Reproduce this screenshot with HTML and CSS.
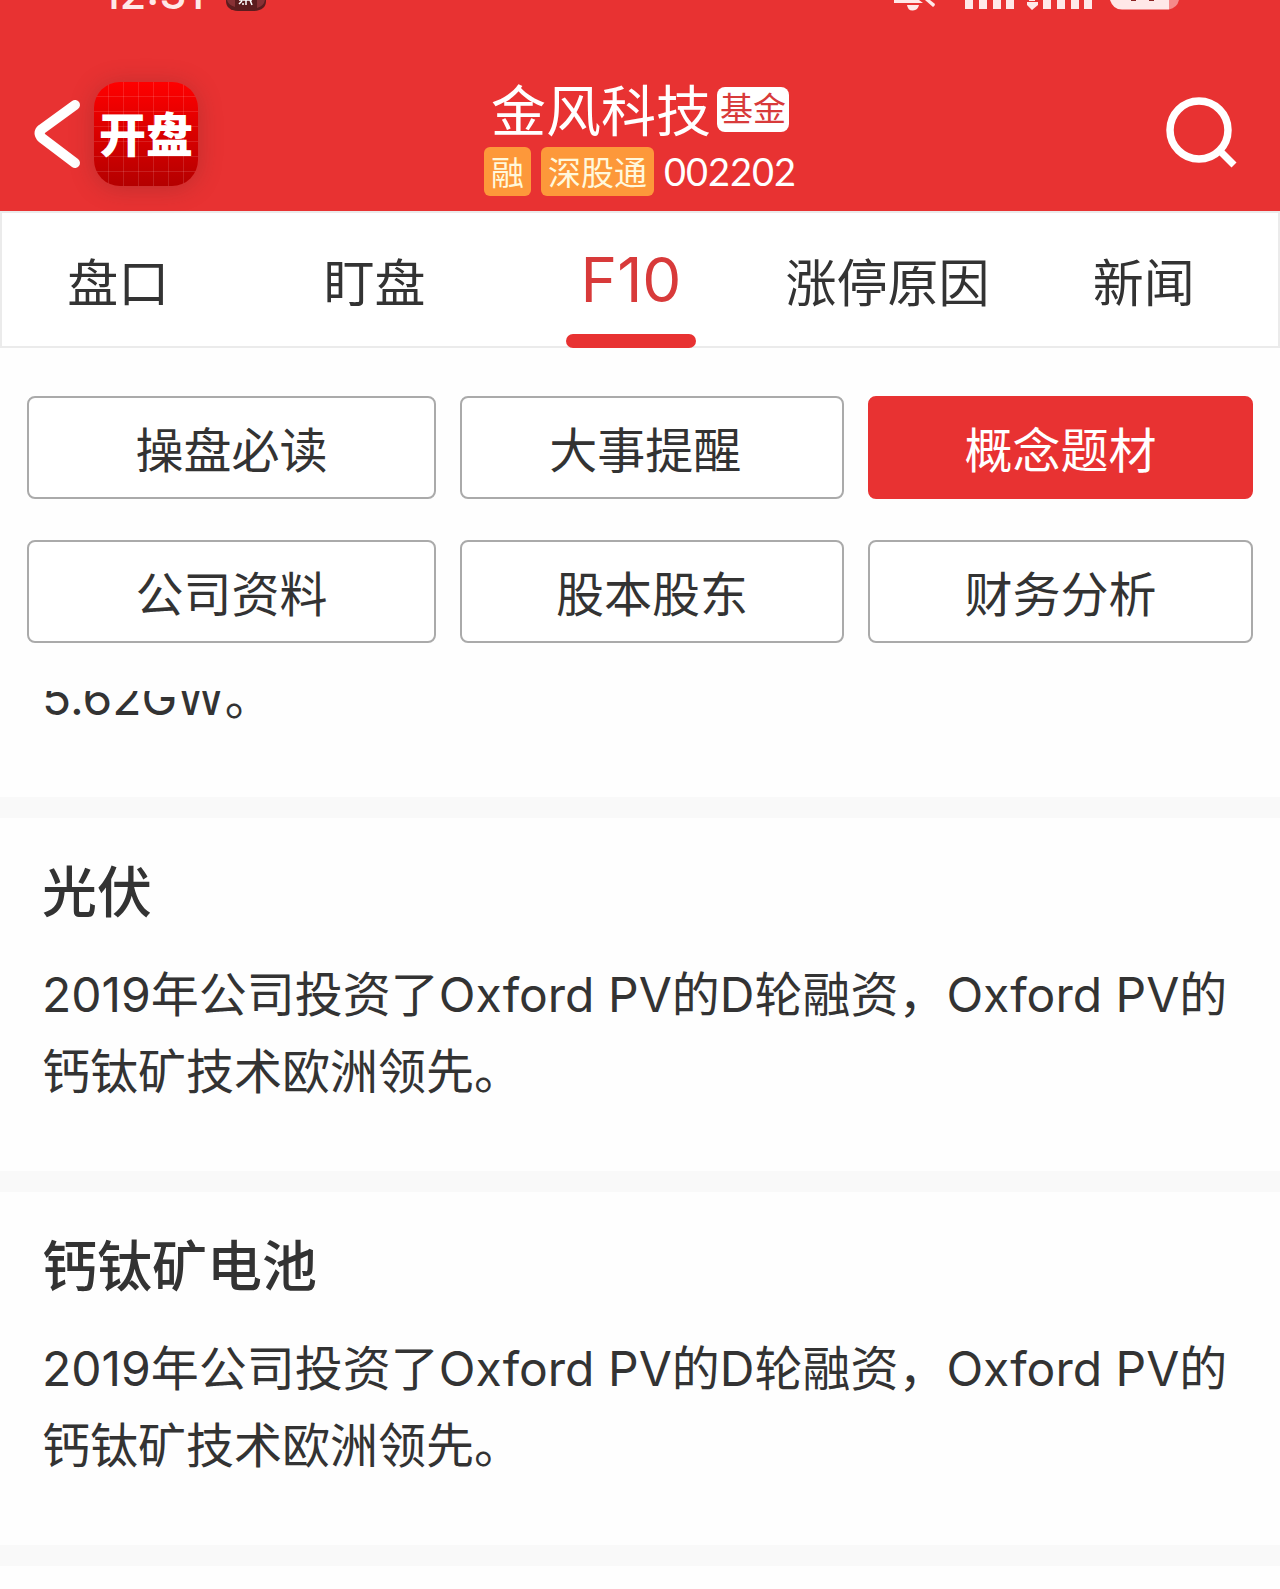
FILE: index.html
```
<!DOCTYPE html>
<html lang="zh-CN">
<head>
    <meta charset="UTF-8">
    <meta name="viewport" content="width=device-width, initial-scale=1.0">
    <title>金风科技 002202</title>
    <link rel="stylesheet" href="styles.css">
</head>
<body>
    <header class="header">
        <div class="status-bar">
            <span class="time">12:31</span>
            <svg class="status-app" width="40" height="12" viewBox="0 0 40 12">
                <path d="M0 0h40v1q0 9-12 10H12Q0 10 0 1z" fill="#5c1c1e"/>
                <path d="M1 0h8v7Q2 5 1 0zM31 0h8q-1 6-8 8z" fill="#873034"/>
                <path d="M13 0h13M20 0v5M16 1l-3 3M24 0l2 5M17 3v2" stroke="#fff" stroke-width="1.500" fill="none"/>
            </svg>
            <svg class="status-icons" width="286" height="12" viewBox="0 0 286 12">
                <g fill="#ffe8e8">
                    <path d="M0 0h25l4 3H0zM13 5h12q-1 5-6 5.500t-6-5.500z"/>
                    <path d="M31 0h5l5 4q0 2-2 3z"/>
                    <path d="M71 0h8v9h-8zM85 0h8v9h-8zM99 0h8v9h-8zM112 0h8v9h-8z"/>
                    <path d="M135 0h6v1h-6zM133 2h11v3l-6 5-5-5z"/>
                    <path d="M149 0h8v9h-8zM163 0h8v9h-8zM177 0h8v9h-8zM190 0h8v9h-8z"/>
                    <path d="M216 0h59v9.500h-47q-9 0-12-9.500z"/>
                </g>
                <path d="M275 0h10q-2 8-10 9.500z" fill="#f58a8a"/>
                <path d="M237 0h5v1h-5zM255 0h5v1h-5z" fill="#8a2424"/>
            </svg>
        </div>
        <div class="nav">
            <div class="nav-left">
                <button class="icon-btn" type="button" aria-label="返回">
                    <svg width="60" height="104" viewBox="0 0 60 104">
                        <path d="M41 23 8 47q-5 4 0 9l33 25" fill="none" stroke="#fff" stroke-width="10" stroke-linecap="round" stroke-linejoin="round"/>
                    </svg>
                </button>
                <div class="app-icon">开盘</div>
            </div>
            <div class="stock">
                <div class="stock-name">
                    <h1>金风科技</h1>
                    <span class="fund-tag">基金</span>
                </div>
                <div class="stock-info">
                    <span class="tag">融</span>
                    <span class="tag">深股通</span>
                    <span class="code">002202</span>
                </div>
            </div>
            <button class="icon-btn search" type="button" aria-label="搜索">
                <svg width="72" height="104" viewBox="0 0 72 104">
                    <circle cx="33" cy="48" r="29" fill="none" stroke="#fff" stroke-width="7.500"/>
                    <path d="M54 69l14 14" stroke="#fff" stroke-width="7"/>
                </svg>
            </button>
        </div>
    </header>

    <nav class="tabs">
        <div class="tab-list">
            <a href="#" class="tab">盘口</a>
            <a href="#" class="tab">盯盘</a>
            <a href="#" class="tab active">F10</a>
            <a href="#" class="tab">涨停原因</a>
            <a href="#" class="tab">新闻</a>
        </div>
    </nav>

    <div class="menu">
        <button type="button" class="menu-btn">操盘必读</button>
        <button type="button" class="menu-btn">大事提醒&nbsp;</button>
        <button type="button" class="menu-btn active">概念题材</button>
        <button type="button" class="menu-btn">公司资料</button>
        <button type="button" class="menu-btn">股本股东</button>
        <button type="button" class="menu-btn">财务分析</button>
    </div>

    <main class="content">
        <section class="topic scrolled">
            <p>5.62GW。</p>
        </section>
        <section class="topic">
            <h2>光伏</h2>
            <p>2019年公司投资了Oxford PV的D轮融资，Oxford PV的钙钛矿技术欧洲领先。</p>
        </section>
        <section class="topic">
            <h2>钙钛矿电池</h2>
            <p>2019年公司投资了Oxford PV的D轮融资，Oxford PV的钙钛矿技术欧洲领先。</p>
        </section>
    </main>
</body>
</html>
```
FILE: styles.css
```
* {
    box-sizing: border-box;
}
body {
    margin: 0;
    background-color: #fefefe;
    color: #333;
    font-family: Inter, "Noto Sans CJK SC", sans-serif;
    font-size: 48px;
}
h1, h2, p {
    margin: 0;
}
button {
    font-family: inherit;
    cursor: pointer;
}

/* Header */
.header {
    background-color: #e83232;
    color: #fff;
}
.status-bar {
    display: flex;
    align-items: flex-end;
    height: 12px;
    padding: 0 100px 0 102px;
    overflow: hidden;
}
.time {
    font-size: 43px;
    line-height: 42px;
    font-weight: 500;
    color: #ffe8e8;
    margin-bottom: -2px;
}
.status-app {
    margin-left: 22px;
}
.status-icons {
    margin-left: auto;
}
.nav {
    display: grid;
    grid-template-columns: 1fr auto 1fr;
    padding: 64px 34px 15px;
}
.nav-left {
    display: flex;
    margin-top: 6px;
}
.icon-btn {
    align-self: start;
    padding: 0;
    border: 0;
    background: none;
}
.icon-btn svg {
    display: block;
}
.search {
    justify-self: end;
    margin: 6px 8px 0 0;
}
.app-icon {
    width: 104px;
    height: 104px;
    border-radius: 26px;
    background-image:
        repeating-linear-gradient(90deg, transparent 0 14px, rgba(255, 255, 255, 0.12) 14px 15px),
        repeating-linear-gradient(transparent 0 14px, rgba(255, 255, 255, 0.12) 14px 15px),
        linear-gradient(#ff0000, #b40000);
    box-shadow: 0 2px 24px rgba(90, 40, 40, 0.3);
    font-size: 47px;
    line-height: 106px;
    font-weight: 900;
    text-align: center;
}
.stock {
    display: flex;
    flex-direction: column;
    align-items: center;
    gap: 5px;
}
.stock-name, .stock-info {
    display: flex;
    align-items: center;
}
.stock-name {
    gap: 6px;
}
.stock-info {
    gap: 10px;
}
.stock-name h1 {
    padding-top: 4px;
    font-size: 55px;
    line-height: 62px;
    font-weight: 400;
}
.fund-tag {
    padding: 0 3px;
    border-radius: 8px;
    background-color: #fff;
    color: #d83a3a;
    font-size: 33px;
    line-height: 45px;
}
.tag {
    padding: 4px 7px 0;
    border-radius: 6px;
    background-color: #fd983a;
    color: #fff8dc;
    font-size: 33px;
    line-height: 45px;
}
.code {
    font-family: Lato, sans-serif;
    font-size: 38px;
    line-height: 49px;
}

/* Tabs */
.tabs {
    border: 2px solid #ebebeb;
    background-color: #fff;
}
.tab-list {
    display: flex;
    margin: 0 6px 0 -12px;
}
.tab {
    flex: 1 1 0;
    position: relative;
    height: 133px;
    padding-top: 8px;
    font-size: 51px;
    line-height: 125px;
    text-align: center;
    white-space: nowrap;
    color: inherit;
    text-decoration: none;
}
.tab.active {
    padding-top: 4px;
    color: #d83a3a;
    font-size: 62px;
}
.tab.active::after {
    content: "";
    position: absolute;
    left: 50%;
    bottom: -2px;
    width: 130px;
    height: 14px;
    margin-left: -65px;
    border-radius: 7px;
    background-color: #e83232;
}

/* Menu */
.menu {
    display: grid;
    grid-template-columns: 409fr 384fr 385fr;
    gap: 41px 24px;
    padding: 48px 27px;
}
.menu-btn {
    height: 103px;
    padding: 0 0 2px;
    border: 2px solid #aaa;
    border-radius: 8px;
    background-color: #fff;
    color: #333;
    font-size: 48px;
}
.menu-btn.active {
    border-color: #e83232;
    background-color: #e83232;
    color: #fff;
}

/* Topics */
.content {
    overflow: hidden;
}
.topic {
    padding: 36px 32px 61px 42px;
    border-bottom: 21px solid #f9f9f9;
}
.topic h2 {
    margin-bottom: 25px;
    font-size: 55px;
    line-height: 77px;
    font-weight: 500;
}
.topic p {
    line-height: 77px;
}
.topic.scrolled {
    margin-top: -32px;
    padding-top: 0;
}
```
